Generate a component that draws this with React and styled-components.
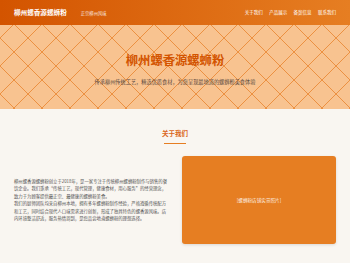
import React from "react";
import styled, { createGlobalStyle } from "styled-components";

const Global = createGlobalStyle`
  html, body { margin: 0; padding: 0; }
  body {
    background: #f9f6f1;
    font-family: "Noto Sans CJK SC", "Noto Sans", sans-serif;
    color: #555;
  }
`;

const Header = styled.header`
  height: 25px;
  display: flex;
  align-items: center;
  justify-content: space-between;
  padding: 0 14px;
  background: linear-gradient(90deg, #d35400 0%, #e67e22 100%);
  color: #fff;
`;

const Brand = styled.div`
  display: flex;
  align-items: baseline;
  gap: 14px;
`;

const Logo = styled.div`
  font-size: 6.6px;
  font-weight: 700;
  line-height: 1;
`;

const Tagline = styled.div`
  font-size: 4.3px;
  opacity: 0.85;
  line-height: 1;
`;

const Nav = styled.nav`
  display: flex;
  gap: 6.4px;
`;

const NavLink = styled.a`
  font-size: 4.5px;
  line-height: 1;
  color: #fff;
  text-decoration: none;
`;

const Hero = styled.section`
  height: 84px;
  box-sizing: border-box;
  padding-top: 27.5px;
  text-align: center;
  background-color: #f8c390;
  background-image:
    linear-gradient(45deg, transparent calc(50% - 0.6px), rgba(232, 128, 40, 0.75) calc(50% - 0.6px), rgba(232, 128, 40, 0.75) calc(50% + 0.6px), transparent calc(50% + 0.6px)),
    linear-gradient(-45deg, transparent calc(50% - 0.6px), rgba(232, 128, 40, 0.75) calc(50% - 0.6px), rgba(232, 128, 40, 0.75) calc(50% + 0.6px), transparent calc(50% + 0.6px));
  background-size: 28px 28px;
  background-position: 14px -1px;
`;

const HeroTitle = styled.h1`
  margin: 0;
  font-size: 12.3px;
  line-height: 15px;
  font-weight: 700;
  color: #d35400;
`;

const HeroSub = styled.p`
  margin: 10px 0 0;
  font-size: 5.2px;
  line-height: 7px;
  color: #5a4a40;
`;

const About = styled.section`
  padding: 20px 14px 20px;
`;

const SectionTitle = styled.h2`
  margin: 0;
  text-align: center;
  font-size: 6.5px;
  line-height: 8px;
  font-weight: 700;
  color: #d9651a;
`;

const Underline = styled.div`
  width: 22px;
  height: 1px;
  margin: 6px auto 0;
  background: #e67e22;
`;

const Grid = styled.div`
  margin-top: 12px;
  display: grid;
  grid-template-columns: 1fr 1fr;
  gap: 14px;
  align-items: center;
`;

const Text = styled.div`
  font-size: 4.35px;
  line-height: 7.5px;
  color: #555;
`;

const Para = styled.p`
  margin: 0;
`;

const Photo = styled.div`
  height: 88px;
  border-radius: 3px;
  background: #e67e22;
  box-shadow: 0 1px 3px rgba(0, 0, 0, 0.12);
  display: flex;
  align-items: center;
  justify-content: center;
  color: rgba(255, 255, 255, 0.9);
  font-size: 4.6px;
`;

export default function App() {
  return (
    <>
      <Global />
      <Header>
        <Brand>
          <Logo>柳州螺香源螺蛳粉</Logo>
          <Tagline>正宗柳州风味</Tagline>
        </Brand>
        <Nav>
          <NavLink href="#about">关于我们</NavLink>
          <NavLink href="#products">产品展示</NavLink>
          <NavLink href="#record">备案信息</NavLink>
          <NavLink href="#contact">联系我们</NavLink>
        </Nav>
      </Header>
      <Hero>
        <HeroTitle>柳州螺香源螺蛳粉</HeroTitle>
        <HeroSub>传承柳州传统工艺，精选优质食材，为您呈现最地道的螺蛳粉美食体验</HeroSub>
      </Hero>
      <About id="about">
        <SectionTitle>关于我们</SectionTitle>
        <Underline />
        <Grid>
          <Text>
            <Para>
              柳州螺香源螺蛳粉创立于2018年，是一家专注于传统柳州螺蛳粉制作与销售的餐饮企业。我们秉承“传统工艺，现代管理，健康食材，用心服务”的经营理念，致力于为顾客提供最正宗、最健康的螺蛳粉美食。
            </Para>
            <Para>
              我们的厨师团队均来自柳州本地，拥有多年螺蛳粉制作经验，严格遵循传统配方和工艺，同时结合现代人口味需求进行创新，形成了独具特色的螺香源风味。店内环境整洁舒适，服务热情周到，是您品尝地道螺蛳粉的理想选择。
            </Para>
          </Text>
          <Photo>[螺蛳粉店铺实景照片]</Photo>
        </Grid>
      </About>
    </>
  );
}
